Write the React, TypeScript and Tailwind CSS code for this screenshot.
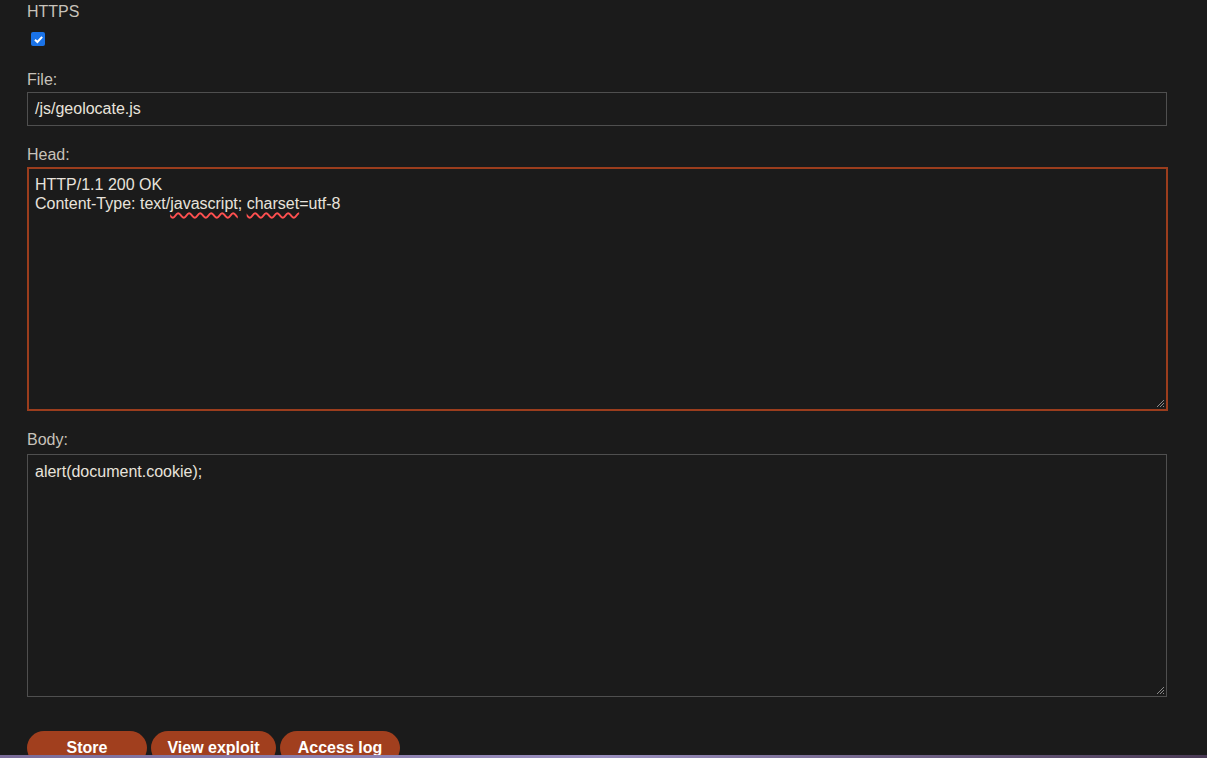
function Grip({ color }: { color: string }) {
  return (
    <svg className="absolute bottom-[1px] right-[1px]" width="10" height="10" viewBox="0 0 10 10">
      <path d="M9 2 L2 9 M9 5 L5 9 M9 8 L8 9" stroke={color} strokeWidth="1" fill="none" />
    </svg>
  );
}

export default function App() {
  const font = { fontFamily: '"Liberation Sans", Arial, sans-serif' };
  return (
    <div className="relative h-[758px] w-full overflow-hidden bg-[#1b1b1b]" style={font}>
      <div className="flex flex-col pl-[27px] pr-[40px] text-[16px] leading-[18px]">
        {/* HTTPS */}
        <label className="mt-[3px] text-[#c7c2ba]">HTTPS</label>
        <div className="ml-[4px] mt-[11px] flex h-[14px] w-[14px] items-center justify-center rounded-[2px] bg-[#1a73e8]">
          <svg width="11" height="11" viewBox="0 0 10 10">
            <path d="M1.8 5.2 L4 7.3 L8.3 2.6" stroke="white" strokeWidth="1.8" fill="none" />
          </svg>
        </div>

        {/* File */}
        <label className="mt-[25px] text-[#c7c2ba]">File:</label>
        <div className="mt-[3px] flex h-[34px] w-[1140px] items-center border border-[#4f4f4f] px-[7px] text-[#e8e3dc]">
          /js/geolocate.js
        </div>

        {/* Head */}
        <label className="mt-[20px] text-[#c7c2ba]">Head:</label>
        <div className="relative mt-[3px] h-[244px] w-[1141px] border-2 border-[#9b3d1d] px-[6px] pt-[6px] leading-[19px] text-[#e8e3dc]">
          <div>HTTP/1.1 200 OK</div>
          <div>
            Content-Type: text/
            <span className="underline decoration-[#ff5050] decoration-wavy decoration-[1.5px] underline-offset-[3px]">javascript</span>
            ;{" "}
            <span className="underline decoration-[#ff5050] decoration-wavy decoration-[1.5px] underline-offset-[3px]">charset</span>
            =utf-8
          </div>
          <Grip color="#8a8a8a" />
        </div>

        {/* Body */}
        <label className="mt-[20px] text-[#c7c2ba]">Body:</label>
        <div className="relative mt-[5px] h-[243px] w-[1140px] border border-[#4f4f4f] px-[7px] pt-[7px] leading-[19px] text-[#e8e3dc]">
          alert(document.cookie);
          <Grip color="#8a8a8a" />
        </div>

        {/* Buttons */}
        <div className="mt-[34px] flex gap-[4px]">
          <button className="h-[34px] w-[120px] rounded-[17px] bg-[#a13f1e] pb-[1px] font-bold text-white">Store</button>
          <button className="h-[34px] w-[125px] rounded-[17px] bg-[#a13f1e] pb-[1px] font-bold text-white">View exploit</button>
          <button className="h-[34px] w-[120px] rounded-[17px] bg-[#a13f1e] pb-[1px] font-bold text-white">Access log</button>
        </div>
      </div>

      {/* bottom image strip */}
      <div className="absolute bottom-0 left-0 h-[3px] w-full bg-gradient-to-r from-[#7a6c99] via-[#9a8fbf] to-[#4a3a55]" />
    </div>
  );
}
